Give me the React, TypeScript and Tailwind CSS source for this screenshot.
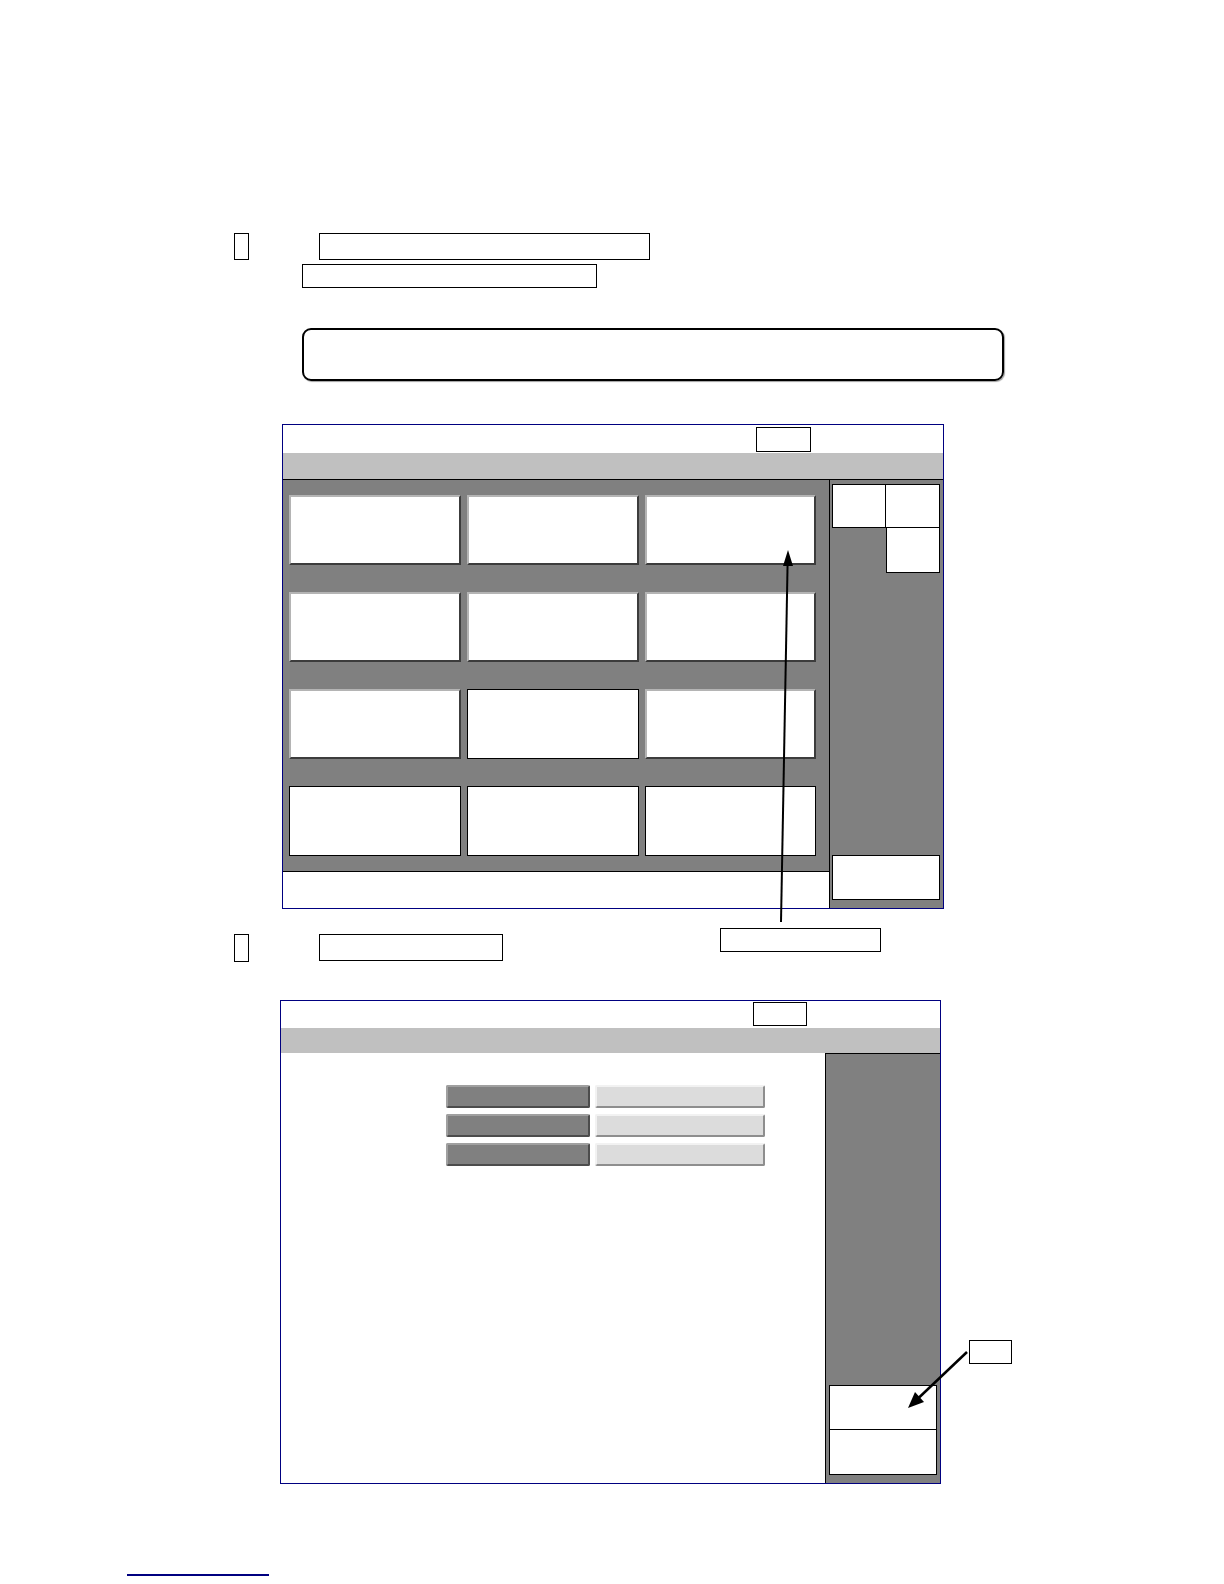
import React from 'react';

const plainBox = 'border-[1.5px] border-black bg-white';
const bevelBox =
  'border-2 border-t-[#b4b4b4] border-l-[#b4b4b4] border-r-[#3c3c3c] border-b-[#3c3c3c] bg-white';

// 3 x 4 grid of the first screen; true = raised button, false = flat outlined
const tiles: boolean[] = [
  true, true, true,
  true, true, true,
  true, false, true,
  false, false, false,
];

function Arrows() {
  return (
    <svg
      className="absolute inset-0 pointer-events-none"
      width={1224}
      height={1584}
      viewBox="0 0 1224 1584"
    >
      {/* label -> top right tile */}
      <line x1={781} y1={922} x2={787.6} y2={563} stroke="#000" strokeWidth={2} />
      <polygon points="788,550 783,566 793,566" fill="#000" />
      {/* label -> lower panel button */}
      <line x1={967} y1={1352} x2={918} y2={1398.5} stroke="#000" strokeWidth={2.5} />
      <polygon points="908,1408 915,1392 924,1402" fill="#000" />
    </svg>
  );
}

export default function App() {
  return (
    <div className="relative w-[1224px] h-[1584px] bg-white overflow-hidden font-['Liberation_Sans',sans-serif]">
      <div className="pt-[233px]">
        {/* step 1 heading */}
        <div className="flex items-start">
          <div className="ml-[234px] w-[15px] h-[27px] border-[1.5px] border-black" />
          <div className="ml-[70px] w-[331px] h-[27px] border-[1.5px] border-black" />
        </div>
        <div className="mt-[4px] ml-[302px] w-[295px] h-[24px] border-[1.5px] border-black" />

        {/* note */}
        <div className="mt-[40px] ml-[302px] w-[702px] h-[53px] rounded-[9px] border-2 border-black shadow-[1px_1px_1px_#a0a0a0]" />

        {/* screen 1 */}
        <div className="mt-[43px] ml-[282px] w-[662px] h-[485px] border border-[#000080] flex flex-col">
          <div className="h-[28px] pl-[473px] pt-[2px]">
            <div className="w-[55px] h-[25px] border-[1.5px] border-black" />
          </div>
          <div className="h-[26px] bg-[#c0c0c0]" />
          <div className="flex flex-1 border-t border-black">
            <div className="w-[546px] flex flex-col">
              <div className="bg-[#808080] pl-[6px] py-[15px] grid grid-cols-[172px_172px_171px] gap-x-[6px] gap-y-[27px]">
                {tiles.map((raised, i) => (
                  <div key={i} className={`h-[70px] ${raised ? bevelBox : plainBox}`} />
                ))}
              </div>
              <div className="flex-1 border-t border-black bg-white" />
            </div>
            <div className="flex-1 bg-[#808080] border-l border-black flex flex-col justify-between pl-[2px] pr-[3px] pt-[4px] pb-[8px]">
              <div className="flex flex-col">
                <div className="flex">
                  <div className="w-[54px] h-[44px] border-[1.5px] border-black bg-white" />
                  <div className="w-[54px] h-[44px] border-[1.5px] border-l-0 border-black bg-white" />
                </div>
                <div className="ml-[54px] w-[54px] h-[45px] border-[1.5px] border-t-0 border-black bg-white" />
              </div>
              <div className="h-[45px] border-[1.5px] border-black bg-white" />
            </div>
          </div>
        </div>

        {/* step 2 heading + label */}
        <div className="mt-[19px] flex items-start">
          <div className="ml-[234px] mt-[6px] w-[15px] h-[28px] border-[1.5px] border-black" />
          <div className="ml-[70px] mt-[6px] w-[184px] h-[27px] border-[1.5px] border-black" />
          <div className="ml-[217px] w-[161px] h-[24px] border-[1.5px] border-black" />
        </div>

        {/* screen 2 */}
        <div className="mt-[38px] flex items-start">
          <div className="ml-[280px] w-[661px] h-[484px] border border-[#000080] flex flex-col">
            <div className="h-[27px] pl-[472px] pt-[1px]">
              <div className="w-[54px] h-[24px] border-[1.5px] border-black" />
            </div>
            <div className="h-[25px] bg-[#c0c0c0]" />
            <div className="flex flex-1">
              <div className="w-[544px] pt-[32px] pl-[165px] flex flex-col gap-[6px]">
                {[0, 1, 2].map((r) => (
                  <div key={r} className="flex gap-[5px]">
                    <div className="w-[144px] h-[23px] rounded-[2px] border-2 border-t-[#a0a0a0] border-l-[#a0a0a0] border-r-[#4c4c4c] border-b-[#4c4c4c] bg-[#808080]" />
                    <div className="w-[170px] h-[23px] rounded-[2px] border-2 border-t-[#f2f2f2] border-l-[#f2f2f2] border-r-[#8e8e8e] border-b-[#8e8e8e] bg-[#dcdcdc]" />
                  </div>
                ))}
              </div>
              <div className="flex-1 bg-[#808080] border-l border-t border-black flex flex-col justify-end px-[3px] pb-[8px]">
                <div className="h-[45px] border-[1.5px] border-black bg-white" />
                <div className="h-[45px] border-[1.5px] border-t-0 border-black bg-white" />
              </div>
            </div>
          </div>
          <div className="ml-[28px] mt-[340px] w-[43px] h-[24px] border-[1.5px] border-black" />
        </div>

        {/* footnote rule */}
        <div className="mt-[90px] ml-[127px] w-[142px] h-[2px] bg-[#000080]" />
      </div>
      <Arrows />
    </div>
  );
}
